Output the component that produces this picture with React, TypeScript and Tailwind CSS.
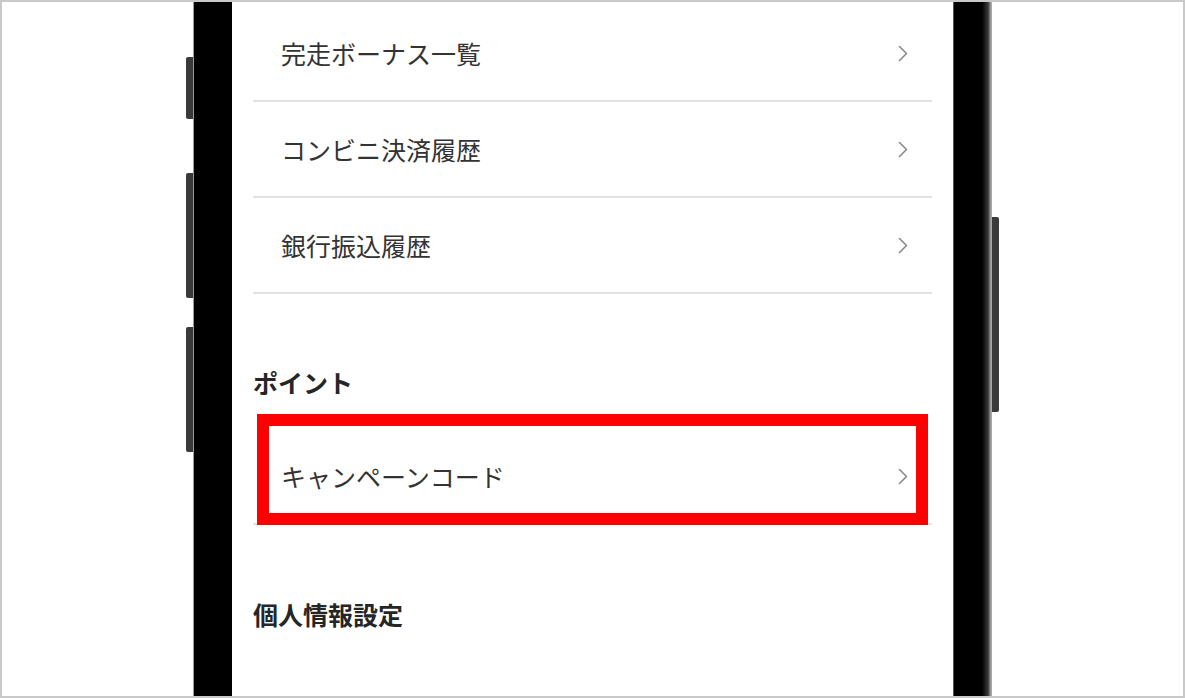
import React from "react";

const jp = { fontFamily: '"Noto Sans CJK JP", "Noto Sans", sans-serif' };

function Chevron() {
  return (
    <svg width="10" height="17" viewBox="0 0 10 17" fill="none" className="shrink-0">
      <polyline points="1.5,1.5 8.5,8.5 1.5,15.5" stroke="#8a8a8a" strokeWidth="1.6" strokeLinecap="round" strokeLinejoin="round" />
    </svg>
  );
}

function MenuRow({ label, className = "" }: { label: string; className?: string }) {
  return (
    <div className={`flex items-center justify-between border-b-2 border-[#e2e2e2] pl-[28px] pr-[24px] ${className}`}>
      <span className="text-[25px] leading-none text-[#333]">{label}</span>
      <Chevron />
    </div>
  );
}

function SectionTitle({ label, className = "" }: { label: string; className?: string }) {
  return (
    <h2 className={`text-[25px] font-bold leading-none text-[#262626] ${className}`}>{label}</h2>
  );
}

export default function App() {
  return (
    <div
      className="w-[1185px] h-[698px] border-2 border-[#c9c9c9] bg-white flex justify-center overflow-hidden"
      style={jp}
    >
      {/* left side buttons */}
      <div className="w-[7px] flex flex-col">
        <div className="mt-[55px] h-[62px] rounded-l-[2px] bg-[#3a3a3a]" />
        <div className="mt-[54px] h-[125px] rounded-l-[2px] bg-[#3a3a3a]" />
        <div className="mt-[29px] h-[125px] rounded-l-[2px] bg-[#3a3a3a]" />
      </div>

      {/* left bezel */}
      <div className="w-[39px] bg-black border-l border-[#9a9a9a]" />

      {/* screen */}
      <div className="w-[721px] bg-white px-[21px] flex flex-col">
        <MenuRow label="完走ボーナス一覧" className="h-[100px] pt-[4px]" />
        <MenuRow label="コンビニ決済履歴" className="h-[96px]" />
        <MenuRow label="銀行振込履歴" className="h-[96px]" />

        <SectionTitle label="ポイント" className="mt-[76px]" />

        <div className="relative mt-[34px]">
          <MenuRow label="キャンペーンコード" className="h-[96px]" />
          <div className="absolute left-[4px] right-[4px] top-[-15px] bottom-0 border-[12px] border-[#ff0000] pointer-events-none" />
        </div>

        <SectionTitle label="個人情報設定" className="mt-[77px]" />
      </div>

      {/* right bezel */}
      <div className="w-[39px] border-l border-[#555] bg-[linear-gradient(to_right,#000_0%,#000_74%,#3a3a3a_90%,#8a8a8a_95%,#b5b5b5_100%)]" />

      {/* right side button */}
      <div className="w-[7px] flex flex-col">
        <div className="mt-[215px] h-[195px] rounded-r-[2px] bg-[#3a3a3a]" />
      </div>
    </div>
  );
}
